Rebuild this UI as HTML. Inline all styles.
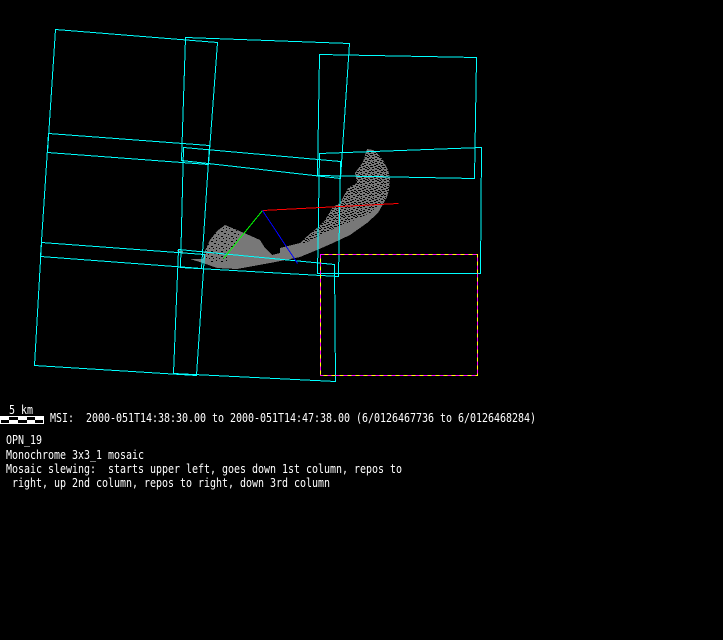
<!DOCTYPE html>
<html>
<head>
<meta charset="utf-8">
<style>
html,body{margin:0;padding:0;background:#000;width:723px;height:640px;overflow:hidden}
svg{position:absolute;left:0;top:0}
.t{position:absolute;white-space:pre;color:#fff;font-family:"DejaVu Sans Mono","Liberation Mono",monospace;font-size:10px;line-height:12px;height:12px;letter-spacing:-0.02px;transform-origin:0 100%;transform:scaleY(1.28)}
</style>
</head>
<body>
<svg width="723" height="640" viewBox="0 0 723 640" shape-rendering="crispEdges">
<defs>
<pattern id="d" width="12" height="12" patternUnits="userSpaceOnUse">
<path fill="#000" d="M0 0h2v1h-2zM5 0h2v1h-2zM9 0h1v1h-1zM7 1h2v1h-2zM3 2h2v1h-2zM11 2h1v1h-1zM9 3h2v1h-2zM0 3h2v1h-2zM5 4h2v1h-2zM1 5h1v1h-1zM8 5h2v1h-2zM3 6h2v1h-2zM11 6h1v1h-1zM0 7h2v1h-2zM7 7h1v1h-1zM9 8h2v1h-2zM4 8h2v1h-2zM2 9h2v1h-2zM6 10h2v1h-2zM0 10h1v1h-1zM10 10h2v1h-2zM3 11h2v1h-2zM8 11h1v1h-1z"/>
</pattern>
<pattern id="s" width="10" height="10" patternUnits="userSpaceOnUse">
<path fill="#000" d="M1 1h2v1h-2zM6 0h1v1h-1zM4 3h2v1h-2zM8 4h1v1h-1zM1 6h2v1h-2zM6 7h1v1h-1zM3 8h1v1h-1zM9 8h1v1h-1z"/>
</pattern>
</defs>

<polygon fill="#787878" points="367,149 373,150 376,152 383,160 388,170 390,178 389,190 387,197 378,213 367,223 350,235 333,243 317,250 300,257 270,263 237,269 217,268 203,263 190,259 203,259 204,253 210,240 217,231 225,225 242,232 260,240 265,248 272,255 280,253 280,248 300,243 305,238 317,228 325,220 333,207 340,203 348,188 357,183 355,173 363,162"/>
<polygon fill="#787878" points="177,250 183,251 183,254 178,252"/>
<polygon fill="url(#d)" points="367,151 376,152 383,160 388,170 390,178 389,190 385,200 370,213 350,222 335,228 320,235 305,243 300,243 305,238 317,228 325,220 333,207 340,203 348,188 357,183 355,173 363,162"/>
<polygon fill="url(#s)" points="204,253 210,240 217,231 225,225 242,232 230,253 228,263 208,263"/>

<g transform="translate(.5 .5)" fill="none" stroke-width="1">
<g stroke="#00ffff">
<polygon points="55,29 217,42 208,164 47,152"/>
<polygon points="48,133 209,145 201,268 40,256"/>
<polygon points="41,242 204,254 196,375 34,365"/>
<polygon points="185,37 349,43 340,178 181,160"/>
<polygon points="183,147 340,161 338,276 180,267"/>
<polygon points="178,249 334,264 335,381 173,373"/>
<polygon points="319,54 476,57 474,178 317,175"/>
<polygon points="319,153 481,147 480,273 317,273"/>
</g>
<line x1="262" y1="210" x2="398" y2="203" stroke="#ff0000"/>
<line x1="262" y1="210" x2="223" y2="258" stroke="#00ff00"/>
<line x1="262" y1="210" x2="297" y2="263" stroke="#0000ff"/>
<rect x="320" y="254" width="157" height="121" stroke="#ffff00"/>
<rect x="320" y="254" width="157" height="121" stroke="#ff00ff" stroke-dasharray="4 4"/>
</g>

<g fill="#fff">
<rect x="0" y="416" width="44" height="1"/>
<rect x="0" y="423" width="44" height="1"/>
<rect x="0" y="416" width="1" height="8"/>
<rect x="43" y="416" width="1" height="8"/>
<rect x="0" y="417" width="9" height="3"/>
<rect x="18" y="417" width="9" height="3"/>
<rect x="35" y="417" width="9" height="3"/>
<rect x="9" y="420" width="9" height="3"/>
<rect x="27" y="420" width="8" height="3"/>
</g>
</svg>

<div class="t" style="left:9px;top:407px">5 km</div>
<div class="t" style="left:50px;top:415px">MSI:  2000-051T14:38:30.00 to 2000-051T14:47:38.00 (6/0126467736 to 6/0126468284)</div>
<div class="t" style="left:6px;top:437px">OPN_19</div>
<div class="t" style="left:6px;top:452px">Monochrome 3x3_1 mosaic</div>
<div class="t" style="left:6px;top:466px">Mosaic slewing:  starts upper left, goes down 1st column, repos to</div>
<div class="t" style="left:6px;top:480px"> right, up 2nd column, repos to right, down 3rd column</div>
</body>
</html>
